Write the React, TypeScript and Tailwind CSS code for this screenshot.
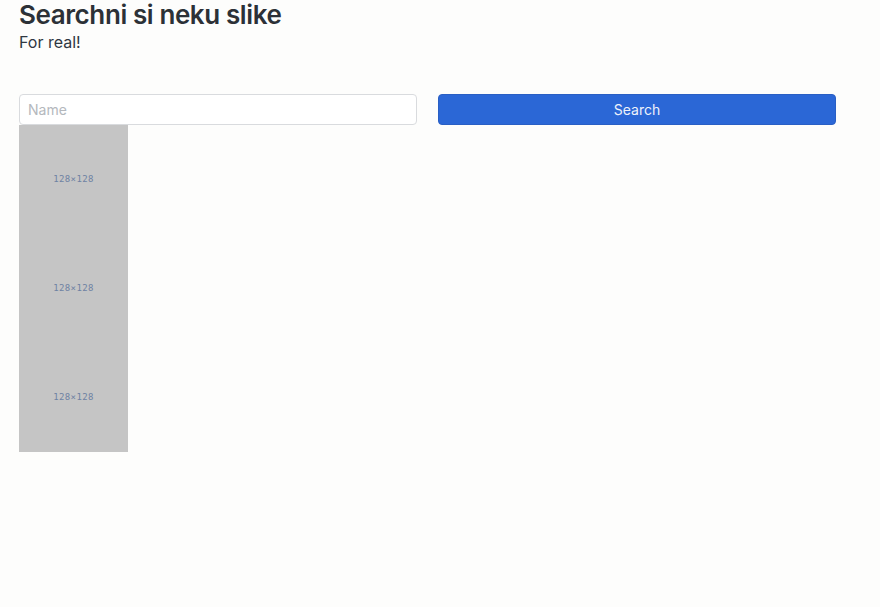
import { useState } from 'react';

const Placeholder = () => (
    <div className="w-[109px] h-[109px] bg-[#c5c5c5] flex items-center justify-center">
        <span className="font-['DejaVu_Sans_Mono',monospace] text-[9px] tracking-[0.4px] text-[#6e82a3]">128×128</span>
    </div>
);

export default function App() {
    const [name, setName] = useState('');

    return (
        <div className="min-h-[607px] bg-[#fdfdfc] font-['Inter',sans-serif] text-[#2c3137]">
            <div className="pl-[19px]">
                <h1 className="text-[26px] font-semibold leading-[30px] tracking-[-0.4px]">Searchni si neku slike</h1>
                <p className="text-[16px] leading-[24px] text-[#2f3742]">For real!</p>

                <div className="flex gap-[21px] mt-[40px]">
                    <input
                        value={name}
                        onChange={(e) => setName(e.target.value)}
                        placeholder="Name"
                        className="w-[398px] h-[31px] px-[8px] text-[14px] border border-[#d9dbde] rounded-[4px] bg-white placeholder:text-[#b4b8bd] outline-none"
                    />
                    <button className="w-[398px] h-[31px] bg-[#2b67d6] text-[#eef2fb] text-[14px] rounded-[4px] border border-[#2a5fc4]">
                        Search
                    </button>
                </div>

                <div className="flex flex-col">
                    <Placeholder />
                    <Placeholder />
                    <Placeholder />
                </div>
            </div>
        </div>
    );
}
